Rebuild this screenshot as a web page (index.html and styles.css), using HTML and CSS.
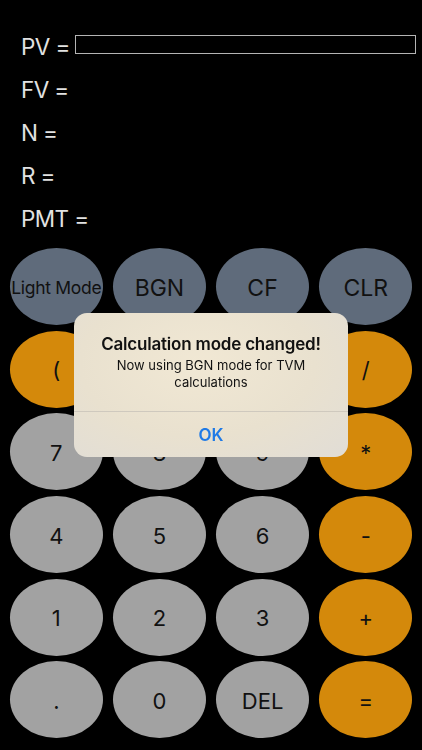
FILE: index.html
```html
<!DOCTYPE html>
<html lang="en">
<head>
  <meta charset="UTF-8" />
  <meta name="viewport" content="width=device-width, initial-scale=1.0" />
  <title>TVM Calculator</title>
  <link rel="stylesheet" href="styles.css">
</head>
<body>
  <div class="fields">
    <div class="field">PV = <span class="field-input"></span></div>
    <div class="field">FV =</div>
    <div class="field">N =</div>
    <div class="field">R =</div>
    <div class="field">PMT =</div>
  </div>

  <div class="keypad">
    <button class="key mode light-mode">Light Mode</button>
    <button class="key mode">BGN</button>
    <button class="key mode">CF</button>
    <button class="key mode">CLR</button>

    <button class="key op">(</button>
    <button class="key op">)</button>
    <button class="key op">^</button>
    <button class="key op">/</button>

    <button class="key">7</button>
    <button class="key">8</button>
    <button class="key">9</button>
    <button class="key op">*</button>

    <button class="key">4</button>
    <button class="key">5</button>
    <button class="key">6</button>
    <button class="key op">-</button>

    <button class="key">1</button>
    <button class="key">2</button>
    <button class="key">3</button>
    <button class="key op">+</button>

    <button class="key">.</button>
    <button class="key">0</button>
    <button class="key">DEL</button>
    <button class="key op">=</button>
  </div>

  <div class="overlay">
    <div class="alert">
      <div class="alert-body">
        <h3>Calculation mode changed!</h3>
        <p>Now using BGN mode for TVM calculations</p>
      </div>
      <button class="alert-ok">OK</button>
    </div>
  </div>
</body>
</html>
```

FILE: styles.css
```css
body {
  margin: 0;
  background: #000;
  font-family: Inter, "Noto Sans", sans-serif;
  color: #e2e2e2;
  width: 422px;
  height: 750px;
  overflow: hidden;
}
.fields {
  padding: 25px 6px 0 21px;
}
.field {
  display: flex;
  align-items: center;
  height: 43px;
  font-size: 22.5px;
  letter-spacing: -0.6px;
  white-space: pre;
}
.field-input {
  flex: 1;
  height: 17px;
  margin-top: -4px;
  border: 1.5px solid #b4b4b4;
}
.keypad {
  display: grid;
  grid-template-columns: repeat(4, 1fr);
  grid-auto-rows: 77px;
  column-gap: 10.5px;
  row-gap: 5.7px;
  padding: 0 10px;
  margin-top: 8px;
}
.key {
  border: none;
  border-radius: 50%;
  background: #a2a2a2;
  color: #111;
  font-family: Inter, "Noto Sans", sans-serif;
  font-size: 22px;
  padding: 2px 0 0;
  display: flex;
  align-items: center;
  justify-content: center;
  white-space: nowrap;
  overflow: visible;
}
.key.mode {
  background: #5f6b7b;
  font-size: 23px;
}
.key.light-mode {
  font-size: 17.5px;
  letter-spacing: -0.3px;
}
.key.op {
  background: #d4890b;
}
.overlay {
  position: fixed;
  inset: 0;
  display: flex;
  align-items: center;
  justify-content: center;
}
.alert {
  width: 274px;
  margin-top: 20px;
  border-radius: 13px;
  background: radial-gradient(ellipse at 45% 35%, #f1e8d4 0%, #e9e1cf 55%, #e1ddd6 100%);
  color: #111;
  text-align: center;
  overflow: hidden;
}
.alert-body {
  padding: 20px 16px 20px;
  border-bottom: 1px solid #cfc9be;
}
.alert h3 {
  margin: 0 0 2.5px;
  font-size: 17px;
  line-height: 22px;
  font-weight: 600;
  letter-spacing: -0.2px;
}
.alert p {
  margin: 0;
  font-size: 13px;
  line-height: 17px;
  padding: 0 18px;
}
.alert-ok {
  display: block;
  width: 100%;
  height: 45px;
  border: none;
  background: transparent;
  color: #1f7ae6;
  font-family: Inter, "Noto Sans", sans-serif;
  font-size: 17px;
  font-weight: 600;
}
```
